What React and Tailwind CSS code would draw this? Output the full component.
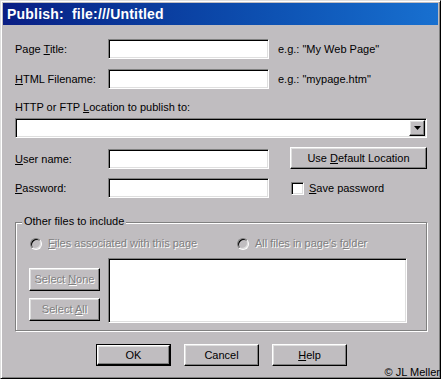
import React from 'react'

const sunken =
  'border border-t-[#808080] border-l-[#808080] border-b-white border-r-white shadow-[inset_1px_1px_0_#000,inset_-1px_-1px_0_#dfdfdf]'
const raised =
  'border border-t-white border-l-white border-b-black border-r-black shadow-[inset_-1px_-1px_0_#808080,inset_1px_1px_0_#dfdfdf] bg-[#c0bdc0]'
const dim = 'text-[#808080] [text-shadow:1px_1px_0_#fff]'

function TextBox() {
  return <div className={`${sunken} bg-white w-[161px] h-[20px]`} />
}

function Row({ label, children }) {
  return (
    <div className="flex items-center h-[20px]">
      <span className="w-[93px]">{label}</span>
      <TextBox />
      {children}
    </div>
  )
}

function Button({ children, className = '', disabled }) {
  return (
    <div className={`${raised} flex items-center justify-center ${disabled ? dim : ''} ${className}`}>
      <span>{children}</span>
    </div>
  )
}

function Radio({ children, className = '' }) {
  return (
    <div className={`flex items-center gap-[6px] ${className}`}>
      <span className="w-[12px] h-[12px] rounded-full border border-t-[#808080] border-l-[#808080] border-b-white border-r-white shadow-[inset_1px_1px_0_#000,inset_-1px_-1px_0_#dfdfdf] bg-[#c0bdc0]" />
      <span className={dim}>{children}</span>
    </div>
  )
}

export default function App() {
  return (
    <div className="relative w-[441px] h-[379px] bg-[#c0bdc0] border border-t-[#dfdfdf] border-l-[#dfdfdf] border-b-black border-r-black shadow-[inset_1px_1px_0_#fff,inset_-1px_-1px_0_#808080] p-[2px] font-['Liberation_Sans',Arial,sans-serif] text-[11px] text-black overflow-hidden">
      <div className="h-[22px] bg-gradient-to-r from-[#0a1e84] to-[#1870d0] flex items-center pl-[4px]">
        <span className="text-white font-bold text-[14px] whitespace-pre tracking-[0.2px]">Publish:  file:///Untitled</span>
      </div>

      <div className="pl-[12px] pr-[11px] pt-[14px] flex flex-col">
        <Row label={<>Page <u>T</u>itle:</>}>
          <span className="ml-[9px]">e.g.: "My Web Page"</span>
        </Row>
        <div className="mt-[10px]">
          <Row label={<><u>H</u>TML Filename:</>}>
            <span className="ml-[9px]">e.g.: "mypage.htm"</span>
          </Row>
        </div>

        <div className="mt-[12px] h-[13px] leading-[13px]">
          HTTP or FTP <u>L</u>ocation to publish to:
        </div>
        <div className={`${sunken} bg-white mt-[4px] h-[20px] flex justify-end items-center pr-[1px]`}>
          <div className={`${raised} w-[16px] h-[16px] flex items-center justify-center`}>
            <svg width="7" height="4" viewBox="0 0 7 4">
              <path d="M0 0h7L3.5 4z" fill="#000" />
            </svg>
          </div>
        </div>

        <div className="mt-[9px] flex items-end h-[22px]">
          <span className="w-[93px] self-center mt-[2px]"><u>U</u>ser name:</span>
          <TextBox />
          <Button className="ml-[21px] w-[137px] h-[22px]">
            Use <u>D</u>efault Location
          </Button>
        </div>

        <div className="mt-[9px]">
          <Row label={<><u>P</u>assword:</>}>
            <span className={`${sunken} bg-white w-[13px] h-[13px] ml-[22px]`} />
            <span className="ml-[5px]"><u>S</u>ave password</span>
          </Row>
        </div>

        <div className="mt-[24px] border border-[#808080] shadow-[1px_1px_0_#fff,inset_1px_1px_0_#fff] h-[109px] flex flex-col">
          <span className="-mt-[8px] ml-[6px] px-[2px] h-[13px] leading-[13px] self-start bg-[#c0bdc0]">
            Other files to include
          </span>
          <div className="mt-[9px] flex h-[13px] items-center">
            <Radio className="ml-[14px] w-[207px]">
              <u>F</u>iles associated with this page
            </Radio>
            <Radio>
              All files in page's f<u>o</u>lder
            </Radio>
          </div>
          <div className="mt-[8px] flex gap-[8px] ml-[13px]">
            <div className="flex flex-col gap-[7px] pt-[10px]">
              <Button disabled className="w-[71px] h-[23px]">
                Select <u>N</u>one
              </Button>
              <Button disabled className="w-[71px] h-[23px]">
                Select <u>A</u>ll
              </Button>
            </div>
            <div className={`${sunken} bg-white w-[299px] h-[65px]`} />
          </div>
        </div>

        <div className="mt-[13px] ml-[81px] flex gap-[13px]">
          <div className="border border-black w-[75px] h-[22px] flex">
            <Button className="flex-1">OK</Button>
          </div>
          <Button className="w-[75px] h-[22px]">Cancel</Button>
          <Button className="w-[75px] h-[22px]">
            <u>H</u>elp
          </Button>
        </div>
      </div>

      <span className="absolute right-0 bottom-0 text-[11px] leading-[12px] text-black">© JL Meller</span>
    </div>
  )
}
